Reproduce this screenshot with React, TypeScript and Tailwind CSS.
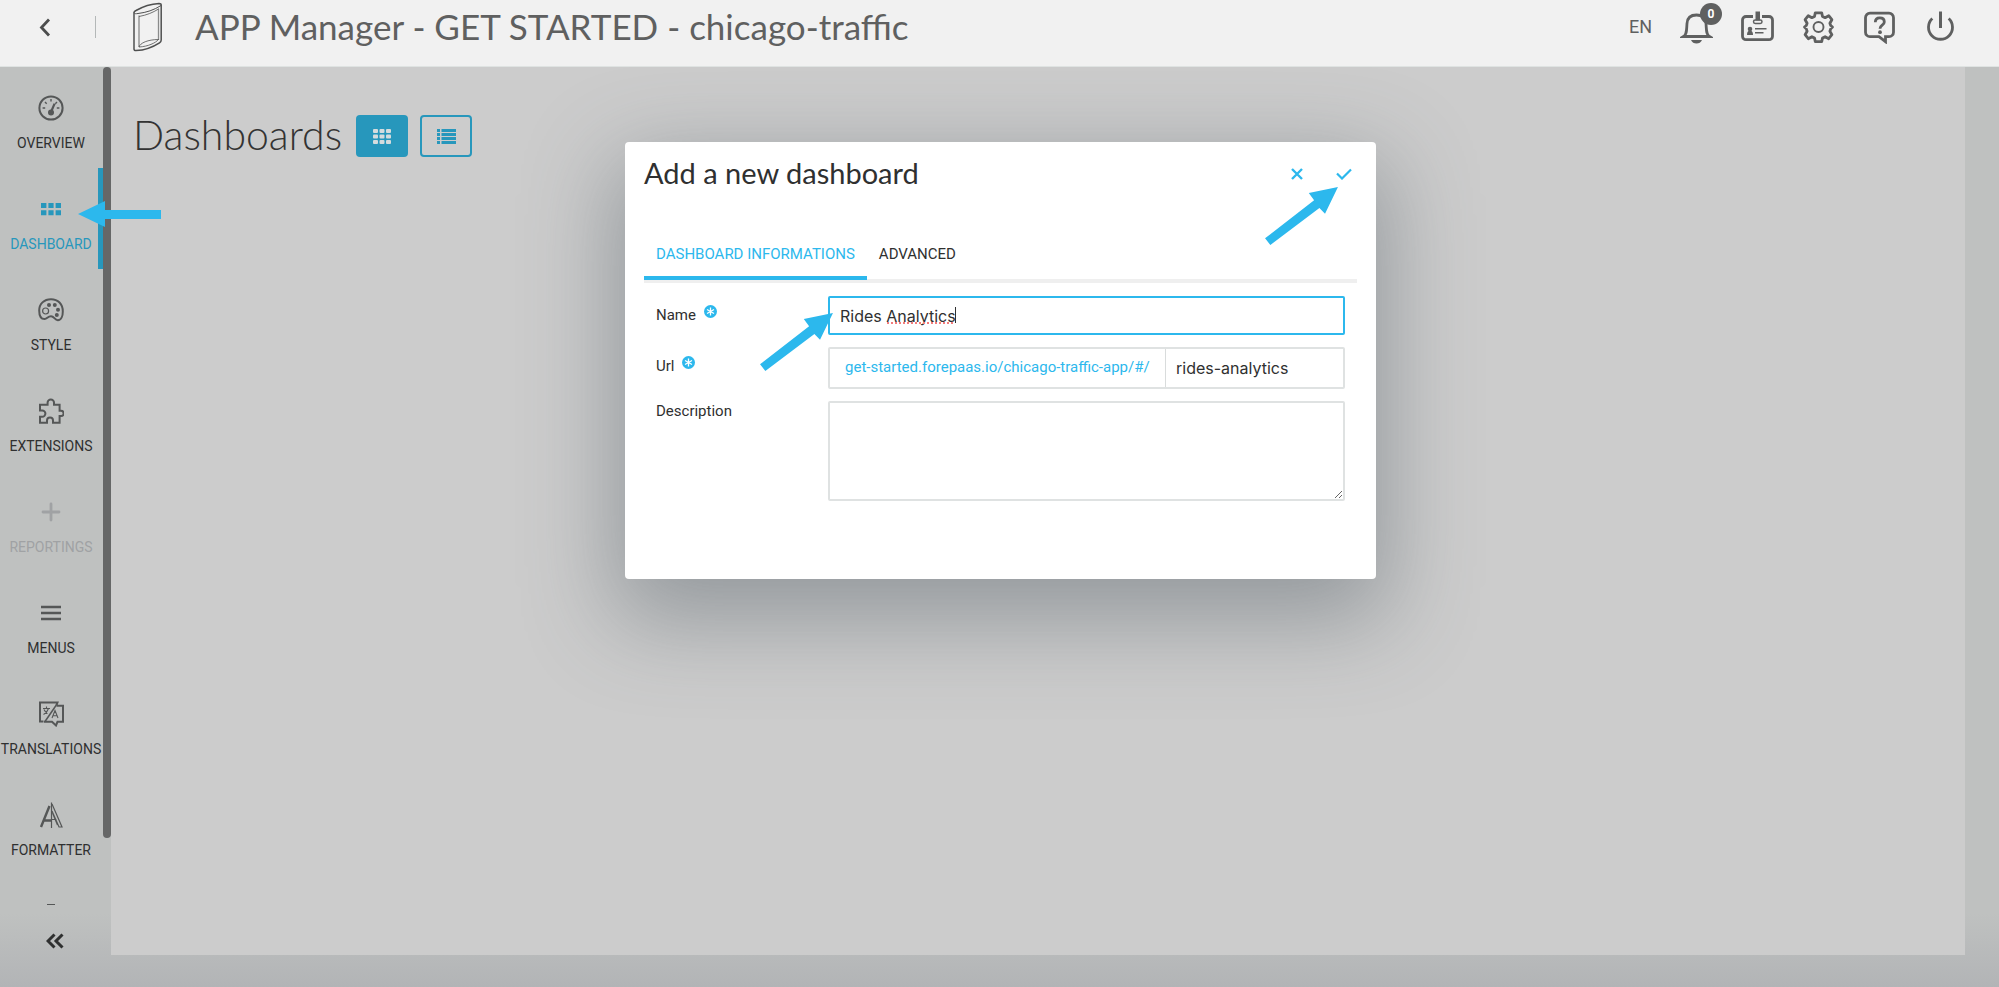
import React, { useState } from "react";

type IconProps = { children: React.ReactNode; className?: string; viewBox?: string };

function Icon({ children, className = "size-[26px]", viewBox = "0 0 26 26" }: IconProps) {
  return (
    <svg viewBox={viewBox} className={className} fill="none" stroke="currentColor" strokeWidth="2" aria-hidden="true">
      {children}
    </svg>
  );
}

const OverviewIcon = () => (
  <Icon>
    <circle cx="13" cy="13" r="11.6" />
    <path d="M13 4v2.6M4.6 13h2.6M18.8 13h2.6M7 7l1.7 1.7M19 7l-1.7 1.7" strokeWidth="1.4" />
    <path d="M16.6 8.6 13 17" strokeWidth="2.2" />
    <circle cx="13" cy="17.4" r="3" fill="currentColor" stroke="none" />
  </Icon>
);

const DashboardIcon = () => (
  <Icon>
    <g fill="currentColor" stroke="none">
      <path d="M3 7h5.4v5H3zM10.4 7h5.2v5h-5.2zM17.6 7H23v5h-5.4zM3 14.2h5.4v5H3zM10.4 14.2h5.2v5h-5.2zM17.6 14.2H23v5h-5.4z" />
    </g>
  </Icon>
);

const StyleIcon = () => (
  <Icon>
    <path d="M13 2.2C6 2.2 1.2 7 1.2 13.4c0 5 1.6 8.6 5.4 8.6 2.6 0 3-2.8 6.4-2.8 3.2 0 3.6 4 6.8 4 3.6 0 5-4.6 5-8.8C24.8 7 20 2.2 13 2.2z" />
    <circle cx="7.6" cy="14" r="3" strokeWidth="1.2" />
    <g fill="currentColor" stroke="none">
      <circle cx="11" cy="8" r="2" />
      <circle cx="16.8" cy="8" r="2" />
      <circle cx="20" cy="12.8" r="2" />
      <circle cx="18.8" cy="18" r="2" />
    </g>
  </Icon>
);

const ExtensionsIcon = () => (
  <Icon>
    <path d="M2 6.8h7.6V4.600a3.200 3.200 0 0 1 6.400 0v2.200h5.600v6H23a2.600 2.600 0 0 1 0 5.200h-1.400v6.800H15v-2.400a3 3 0 0 0-6 0v2.400H2v-6h2.200a3.200 3.200 0 0 0 0-6.400H2z" />
  </Icon>
);

const PlusIcon = () => (
  <Icon>
    <path d="M13 5v16M5 13h16" strokeWidth="2.8" strokeLinecap="round" />
  </Icon>
);

const MenusIcon = () => (
  <Icon>
    <path d="M3 7h20M3 13h20M3 19h20" strokeWidth="2.4" />
  </Icon>
);

const TranslationsIcon = () => (
  <Icon>
    <path d="M18.5 4 19.500 1.500H2v19h3.500M18.500 4.800H25v16h-5.500L18 24.500l-4-3.700H6" strokeWidth="2" />
    <path d="M19 3 7 20.500" strokeWidth="1.5" />
    <path d="M5 7.500h7M8.500 5.500v2M5.500 13.500c2-1 4-3 5-6M6 8.500c.8 1.800 2 3 3.500 4M14 17l3-7.500 3 7.500M15 14.800h4" strokeWidth="1.1" />
  </Icon>
);

const FormatterIcon = () => (
  <Icon>
    <path d="M11.500 4 3 25M6.500 18.500h6.500" strokeWidth="2.4" />
    <path d="M13.500.5v25.500" strokeWidth="1.2" />
    <path d="M14 2l10 23h-3L14 9M14 17.500h4.500M14.500 11l5 12" strokeWidth="1.2" />
  </Icon>
);

const FilterIcon = () => (
  <Icon>
    <path d="M9 2h8M9 2v5L3 24h20L17 7V2" />
  </Icon>
);

const navItems = [
  { label: "OVERVIEW", icon: <OverviewIcon /> },
  { label: "DASHBOARD", icon: <DashboardIcon />, active: true },
  { label: "STYLE", icon: <StyleIcon /> },
  { label: "EXTENSIONS", icon: <ExtensionsIcon /> },
  { label: "REPORTINGS", icon: <PlusIcon />, disabled: true },
  { label: "MENUS", icon: <MenusIcon /> },
  { label: "TRANSLATIONS", icon: <TranslationsIcon /> },
  { label: "FORMATTER", icon: <FormatterIcon /> },
];

function DiagonalArrow({ className }: { className: string }) {
  return (
    <svg viewBox="0 0 220 175" className={className} fill="#2cb8ed" aria-hidden="true">
      <path d="M220 0 132 18 148 40 0 155 16 175 164 63 181 81z" />
    </svg>
  );
}

function Sidebar() {
  return (
    <aside className="flex w-[111px] shrink-0 flex-col">
      <div className="flex min-h-0 flex-1">
        <nav className="min-w-0 flex-1 overflow-hidden">
          {navItems.map((item) => (
            <a
              key={item.label}
              href="#"
              aria-disabled={item.disabled}
              className={
                item.active
                  ? "flex h-[101px] flex-col items-center border-r-[5px] border-[#2797bc] pt-7 pl-1 text-[#2797bc]"
                  : item.disabled
                    ? "flex h-[101px] flex-col items-center pt-7 pr-px text-[#a0a2a4]"
                    : "flex h-[101px] flex-col items-center pt-7 pr-px text-[#2f3030]"
              }
            >
              <span className={item.active || item.disabled ? "" : "text-[#555757]"}>{item.icon}</span>
              <span className="mt-3 text-sm leading-5">{item.label}</span>
            </a>
          ))}
          <a href="#" aria-label="Filters" className="flex h-[101px] flex-col items-center pt-7 pr-px text-[#555757]">
            <FilterIcon />
          </a>
        </nav>
        <div className="w-2 shrink-0">
          <div className="h-[92%] rounded-full bg-[#666767]" />
        </div>
      </div>
      <div className="flex h-[82px] shrink-0 justify-center pt-[26px]">
        <button type="button" aria-label="Collapse menu" className="size-5 text-[#2f3030]">
          <Icon className="size-5" viewBox="0 0 20 20">
            <path d="M8.500 3.500 2 10l6.500 6.500M16.500 3.500 10 10l6.500 6.500" strokeWidth="3" />
          </Icon>
        </button>
      </div>
    </aside>
  );
}

function Header() {
  return (
    <header className="h-[67px] shrink-0 border-b border-[#dfe3e2] bg-[#f1f1f1] text-[#5f6060]">
      <div className="flex h-[54px] items-center pr-[42px] pl-[35px]">
        <button type="button" aria-label="Back" className="size-5 text-[#4c4d4d]">
          <Icon className="size-5" viewBox="0 0 20 20">
            <path d="M14 2.500 6.500 10.500 14 18.500" strokeWidth="2.8" />
          </Icon>
        </button>
        <div className="ml-10 h-[22px] w-px bg-[#b4b8b8]" />
        <svg viewBox="0 0 30 50" className="ml-9 h-[50px] w-[30px]" fill="none" stroke="#4f5050" aria-hidden="true">
          <path d="M2 10.500C2 9.500 3 9 4 8.500 11 4.500 18 2 27 1.500c1.500 0 2.200.5 2.200 1.500v35c0 1.500-.5 2-1.700 2.800C21 45 13.500 48 4 48.600c-1.500 0-2-.6-2-1.600z" strokeWidth="1.500" />
          <path d="M2 10.500c.5 1.500 2 1.300 4 1C14.500 10.500 22 8 29 3.500" strokeWidth="1" />
          <path d="M7 13.500v31.500M26.500 6.500V38" strokeWidth="1.300" stroke="#8a8b8b" />
          <path d="M7 14.500C15 13 21 10.500 26.500 7M7 45c1-4 9-7.500 19.500-7.500C23.500 41 16 44.500 7 45z" strokeWidth=".8" />
        </svg>
        <h1 className="ml-[33px] pb-0.5 font-[Lato,sans-serif] text-[35px] leading-10 whitespace-nowrap">
          APP Manager - GET STARTED - chicago-traffic
        </h1>
        <div className="ml-auto flex items-center gap-7">
          <button type="button" className="text-lg leading-6">EN</button>
          <button type="button" aria-label="Notifications" className="relative size-[33px]">
            <Icon className="size-[33px]" viewBox="0 0 33 33">
              <path d="M3.500 25.500c3.500-2 3-7 3.500-13C7.300 7.500 10.500 4 16.500 4S25.700 7.500 26 12.500c.5 6 0 11 3.500 13z" strokeWidth="2.800" />
              <path d="M11 29h11c-1 2.500-3 3.500-5.500 3.500s-4.500-1-5.500-3.500z" fill="currentColor" stroke="none" />
            </Icon>
            <span className="absolute -top-2 left-5 flex size-[22px] items-center justify-center rounded-full bg-[#5f6060] text-xs font-bold text-white">
              0
            </span>
          </button>
          <button type="button" aria-label="Account" className="size-[33px]">
            <Icon className="size-[33px]" viewBox="0 0 33 33">
              <path d="M12 5.500H5A3.500 3.500 0 0 0 1.500 9v16.200a3.500 3.500 0 0 0 3.500 3.500h23a3.500 3.500 0 0 0 3.500-3.500V9A3.500 3.500 0 0 0 28 5.500h-7" strokeWidth="2.800" />
              <path d="M14.500.5h4.500v9h-4.500z" fill="currentColor" stroke="none" />
              <rect x="12.500" y="9" width="8.500" height="3.500" rx="1.700" strokeWidth="1.500" />
              <circle cx="9" cy="18" r="2.300" fill="currentColor" stroke="none" />
              <path d="M6 24c0-3 1-4.500 3-4.500s3 1.500 3 4.500z" fill="currentColor" stroke="none" />
              <path d="M14 17.700h11.500M14 21.700h8.500" strokeWidth="1.600" />
            </Icon>
          </button>
          <button type="button" aria-label="Settings" className="size-[33px]">
            <Icon className="size-[33px]" viewBox="0 0 33 33">
              <path d="M13.300 1.800h6.400l.8 3.700 2.600 1.200 3.600-2 3.200 4-2 3.500.8 2.300 1.800 1.500-1.800 1.900-.8 2.300 2 3.500-3.200 4-3.600-2-2.600 1.200-.8 3.800h-6.400l-.8-3.800-2.600-1.200-3.600 2-3.200-4 2-3.500-.8-2.300L2.500 16l1.800-1.500.8-2.300-2-3.500 3.200-4 3.600 2 2.600-1.200z" strokeWidth="2.800" strokeLinejoin="round" />
              <circle cx="16.500" cy="16" r="5" strokeWidth="1.900" />
            </Icon>
          </button>
          <button type="button" aria-label="Help" className="size-[33px]">
            <Icon className="size-[33px]" viewBox="0 0 33 33">
              <path d="M7 2.200h19a4.500 4.500 0 0 1 4.500 4.500v14.500a4.500 4.500 0 0 1-4.500 4.500h-3.500v5l-6.500-5H7a4.500 4.500 0 0 1-4.500-4.500V6.700A4.500 4.500 0 0 1 7 2.200z" strokeWidth="2.800" />
              <path d="M12.300 11.200c0-2.500 1.700-4.300 4.500-4.300s4.500 1.600 4.500 4c0 3.300-4.300 3.300-4.300 6.800" strokeWidth="2.800" />
              <circle cx="17" cy="21.200" r="1.900" fill="currentColor" stroke="none" />
            </Icon>
          </button>
          <button type="button" aria-label="Log out" className="size-[33px]">
            <Icon className="size-[33px]" viewBox="0 0 33 33">
              <path d="M16.500.5v16.500" strokeWidth="3" />
              <path d="M8.300 7.500a12 12 0 1 0 16.400 0" strokeWidth="2.800" />
            </Icon>
          </button>
        </div>
      </div>
    </header>
  );
}

function RequiredMark() {
  return (
    <svg viewBox="0 0 13 13" className="mb-2 ml-2 size-[13px]" aria-hidden="true">
      <circle cx="6.500" cy="6.500" r="6.500" fill="#2cb8ed" />
      <path d="M6.500 2.500v8M3 4.500l7 4M10 4.500l-7 4" stroke="#fff" strokeWidth="1.300" />
    </svg>
  );
}

function AddDashboardDialog() {
  const [name, setName] = useState("Rides Analytics");
  const [url, setUrl] = useState("rides-analytics");
  const [description, setDescription] = useState("");
  return (
    <div
      role="dialog"
      aria-labelledby="dialog-title"
      className="relative h-[437px] w-[751px] rounded bg-white px-[19px] text-[#2f3030] shadow-[0_30px_90px_10px_rgba(70,82,90,0.42)]"
    >
      <div className="flex h-16 items-center justify-between">
        <h2 id="dialog-title" className="pb-0.5 font-[Lato,sans-serif] text-[29px] leading-9">Add a new dashboard</h2>
        <div className="flex gap-[23px] pr-px text-[#2cb8ed]">
          <button type="button" aria-label="Cancel" className="flex size-6 items-center justify-center">
            <Icon className="size-3" viewBox="0 0 12 12">
              <path d="M1 1l10 10M11 1 1 11" strokeWidth="2.400" />
            </Icon>
          </button>
          <button type="button" aria-label="Confirm" className="flex size-6 items-center justify-center">
            <Icon className="h-3 w-4" viewBox="0 0 16 12">
              <path d="M1 5.500 6 10.500 15 1.500" strokeWidth="2.200" />
            </Icon>
          </button>
        </div>
      </div>
      <div role="tablist" className="mt-6 flex h-[53px] items-start border-b-4 border-[#efefef] text-[15px] leading-5">
        <button type="button" role="tab" aria-selected="true" className="h-[50px] border-b-4 border-[#2cb8ed] px-3 pt-0.5 text-[#2cb8ed]">
          DASHBOARD INFORMATIONS
        </button>
        <button type="button" role="tab" aria-selected="false" className="h-[46px] px-3 pt-0.5">ADVANCED</button>
      </div>
      <form className="flex flex-col gap-3 px-3 pt-[13px] text-[15px] leading-5" onSubmit={(e) => e.preventDefault()}>
        <div className="flex">
          <label htmlFor="name" className="flex h-[38px] w-[172px] shrink-0 items-center">
            Name
            <RequiredMark />
          </label>
          <div className="relative min-w-0 flex-1">
            <input
              id="name"
              value={name}
              spellCheck={false}
              onChange={(e) => setName(e.target.value)}
              className="h-[39px] w-full rounded-xs border-2 border-[#2cb8ed] px-2.5 font-[Inter,sans-serif] text-base outline-none"
            />
            <span className="pointer-events-none absolute top-[26px] left-[59px] w-[66px] border-b-2 border-dotted border-[#f27c7c]" />
            <span className="pointer-events-none absolute top-[11px] left-[127px] h-4 w-px bg-[#2f3030]" />
          </div>
        </div>
        <div className="flex">
          <label htmlFor="url" className="flex h-[38px] w-[172px] shrink-0 items-center">
            Url
            <RequiredMark />
          </label>
          <div className="flex h-[42px] min-w-0 flex-1 rounded-xs border-2 border-[#dfe2e2]">
            <span className="flex w-[336px] shrink-0 items-center border-r border-[#d9dcdc] px-[15px] pb-0.5 whitespace-nowrap text-[#2cb8ed]">
              get-started.forepaas.io/chicago-traffic-app/#/
            </span>
            <input
              id="url"
              value={url}
              onChange={(e) => setUrl(e.target.value)}
              className="w-0 min-w-0 flex-1 px-2.5 font-[Inter,sans-serif] text-base outline-none"
            />
          </div>
        </div>
        <div className="flex">
          <label htmlFor="description" className="w-[172px] shrink-0">Description</label>
          <textarea
            id="description"
            value={description}
            onChange={(e) => setDescription(e.target.value)}
            className="h-[100px] min-w-0 flex-1 rounded-xs border-2 border-[#dfe2e2] px-2.5 py-2 outline-none"
          />
        </div>
      </form>
      <DiagonalArrow className="pointer-events-none absolute top-[45px] right-[38px] h-[58px] w-[73px]" />
      <DiagonalArrow className="pointer-events-none absolute top-[171px] left-[135px] h-[58px] w-[73px]" />
    </div>
  );
}

export default function App() {
  return (
    <div className="relative flex h-screen flex-col overflow-hidden bg-[#bfc1c0] font-[Roboto,sans-serif]">
      <Header />
      <div className="flex min-h-0 flex-1 bg-linear-to-t from-[#b2b4b6] via-[#bfc1c0] via-8% to-[#bfc1c0]">
        <Sidebar />
        <main className="mr-[34px] mb-8 flex-1 bg-[#cccccc] px-[22px] pt-12">
          <div className="flex items-center gap-3">
            <h2 className="pr-0.5 pb-0.5 font-['Lato_Light',Lato,sans-serif] text-[41px] leading-10 font-light text-[#333333]">Dashboards</h2>
            <button type="button" aria-label="Grid view" className="flex h-[42px] w-[52px] items-center justify-center rounded bg-[#2797bc] text-[#d5dcde]">
              <svg viewBox="0 0 18 15" className="h-[15px] w-[18px]" fill="currentColor" aria-hidden="true">
                {[0, 5.5, 11].map((y) =>
                  [0, 6.5, 13].map((x) => <rect key={`${x}-${y}`} x={x} y={y} width="5" height="4" rx="1" />),
                )}
              </svg>
            </button>
            <button type="button" aria-label="List view" className="flex h-[42px] w-[52px] items-center justify-center rounded border-2 border-[#2797bc] text-[#2797bc]">
              <svg viewBox="0 0 19 15" className="h-[15px] w-[19px]" fill="currentColor" aria-hidden="true">
                {[0, 4, 8, 12].map((y) => (
                  <path key={y} d={`M0 ${y}h3v3H0zM4.5 ${y}H19v3H4.5z`} />
                ))}
              </svg>
            </button>
          </div>
        </main>
      </div>
      <svg viewBox="0 0 83 26" className="pointer-events-none absolute top-[201px] left-[78px] h-[26px] w-[83px]" fill="#2cb8ed" aria-hidden="true">
        <path d="M0 13 27 0v9h56v9H27v8z" />
      </svg>
      <div className="pointer-events-none absolute inset-x-0 top-[67px] bottom-0 flex items-start justify-center overflow-hidden pt-[75px] pl-0.5">
        <div className="pointer-events-auto">
          <AddDashboardDialog />
        </div>
      </div>
    </div>
  );
}
